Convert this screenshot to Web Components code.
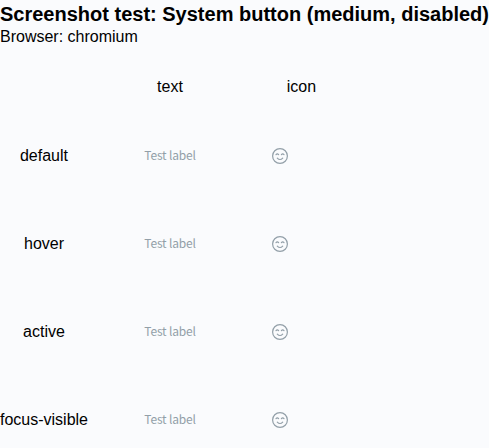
<!DOCTYPE html>
<html lang="en"><head><meta charset="utf-8"><title>System button</title>
<style>html,body{margin:0;background:#fafbfd;overflow:hidden}</style></head><body>
<test-page></test-page>
<script>
customElements.define('smile-icon', class extends HTMLElement{
 constructor(){super();this.attachShadow({mode:'open'}).innerHTML=`<style>:host{display:block;width:24px;height:24px}svg{display:block}</style>
<svg width="24" height="24" viewBox="0 0 24 24" fill="none" stroke="currentColor" stroke-width="1.2" stroke-linecap="round"><circle cx="12" cy="12" r="7.4"/><path d="M8 10.6Q9.3 9.2 10.6 10.6M13.4 10.6Q14.7 9.2 16 10.6M9.3 14.1Q12 16.9 14.7 14.1"/></svg>`}});
customElements.define('system-button', class extends HTMLElement{
 constructor(){super();this.attachShadow({mode:'open'}).innerHTML=`<style>:host{display:flex;align-items:center;height:24px;color:#929fa8;font:12px/24px "Noto Sans CJK SC",sans-serif;letter-spacing:-.18px;white-space:nowrap}</style><slot></slot>`}});
customElements.define('state-row', class extends HTMLElement{
 constructor(){super();this.attachShadow({mode:'open'}).innerHTML=`<style>:host{display:grid;grid-template-columns:88px 164px 56px;height:88px;align-items:center;justify-items:center}span{white-space:nowrap}.label{padding-bottom:2px}</style>
<span>${this.getAttribute('name')}</span><system-button class="label">Test label</system-button><system-button><smile-icon></smile-icon></system-button>`}});
customElements.define('test-page', class extends HTMLElement{
 constructor(){super();this.attachShadow({mode:'open'}).innerHTML=`<style>:host{display:block;width:489px;height:448px;overflow:hidden;font:16px/18px "Liberation Sans",Arial,sans-serif;color:#000}
h1{margin:0;padding-top:3px;font-size:20px;line-height:23px;white-space:nowrap}p{margin:0;padding-top:2px}
.head{display:grid;grid-template-columns:88px 164px 99px;justify-items:center;padding-top:32px;height:34px}</style>
<h1>Screenshot test: System button (medium, disabled)</h1><p>Browser: chromium</p>
<div class="head"><span></span><span>text</span><span>icon</span></div>
<state-row name="default"></state-row><state-row name="hover"></state-row><state-row name="active"></state-row><state-row name="focus-visible"></state-row>`}});
</script></body></html>
